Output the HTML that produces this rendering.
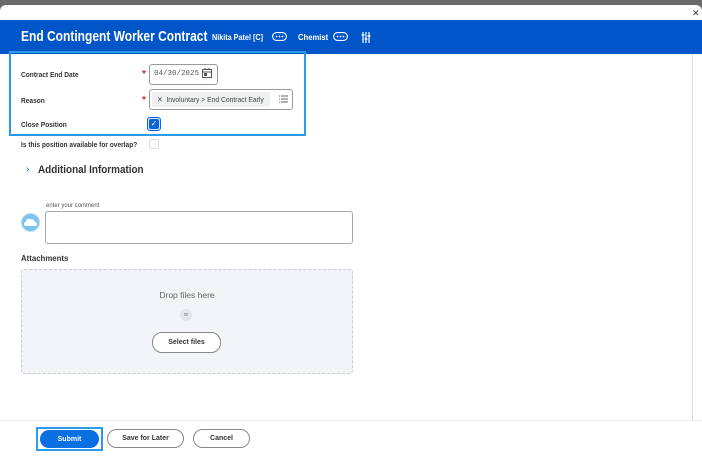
<!DOCTYPE html>
<html><head><style>
*{margin:0;padding:0;box-sizing:border-box}
body{width:702px;height:456px;overflow:hidden;background:#6b6b6b;font-family:"Liberation Sans",sans-serif;position:relative}
.a{position:absolute;white-space:nowrap}
.modal{left:0;top:5px;width:702px;height:451px;background:#fff;border-radius:6px 6px 0 0}
.lbl{font-size:7.5px;color:#333;font-weight:bold;transform:scaleX(.88);transform-origin:0 0}
.ast{color:#d9251d;font-size:10px;font-weight:bold}
.btn{border:1px solid #888;border-radius:10px;font-size:7px;font-weight:bold;color:#333;text-align:center;background:#fff}
.sx{transform-origin:0 0}
</style></head><body>
<div class="a modal"></div>
<div class="a" style="left:692px;top:8px;font-size:9px;color:#333">✕</div>
<div class="a" style="left:0;top:20px;width:702px;height:34px;background:#0055c8"></div>
<div class="a sx" style="left:21px;top:28px;color:#fff;font-size:15px;font-weight:bold;transform:scaleX(.8)">End Contingent Worker Contract</div>
<div class="a sx" style="left:212px;top:32px;color:#fff;font-size:8.5px;font-weight:bold;transform:scaleX(.85)">Nikita Patel [C]</div>
<svg class="a" style="left:272px;top:32px" width="15" height="9" viewBox="0 0 15 9"><rect x="0.6" y="0.6" width="13.8" height="7.8" rx="3.9" fill="none" stroke="#fff" stroke-width="1.1"/><circle cx="4.5" cy="4.5" r=".9" fill="#fff"/><circle cx="7.5" cy="4.5" r=".9" fill="#fff"/><circle cx="10.5" cy="4.5" r=".9" fill="#fff"/></svg>
<div class="a sx" style="left:298px;top:32px;color:#fff;font-size:8.5px;font-weight:bold;transform:scaleX(.9)">Chemist</div>
<svg class="a" style="left:333px;top:32px" width="15" height="9" viewBox="0 0 15 9"><rect x="0.6" y="0.6" width="13.8" height="7.8" rx="3.9" fill="none" stroke="#fff" stroke-width="1.1"/><circle cx="4.5" cy="4.5" r=".9" fill="#fff"/><circle cx="7.5" cy="4.5" r=".9" fill="#fff"/><circle cx="10.5" cy="4.5" r=".9" fill="#fff"/></svg>
<svg class="a" style="left:361px;top:32px" width="10" height="11" viewBox="0 0 10 11" stroke="#fff" stroke-width="1.2" fill="none"><path d="M2 0v11M5 0v11M8 0v11"/><path d="M0.5 3h3M3.5 7h3M6.5 4h3"/></svg>
<div class="a" style="left:9px;top:51px;width:297px;height:85px;border:2px solid #2a9cf0"></div>
<div class="a lbl" style="left:21px;top:70px">Contract End Date</div>
<div class="a lbl" style="left:21px;top:96px">Reason</div>
<div class="a lbl" style="left:21px;top:120px">Close Position</div>
<div class="a lbl" style="left:21px;top:140px">Is this position available for overlap?</div>
<div class="a ast" style="left:142px;top:69px">*</div>
<div class="a ast" style="left:142px;top:95px">*</div>
<div class="a" style="left:149px;top:64px;width:69px;height:21px;border:1px solid #999;border-radius:3px"></div>
<div class="a" style="left:154px;top:70px;font-family:'Liberation Mono',monospace;font-size:7.5px;color:#555">04/30/2025</div>
<svg class="a" style="left:202px;top:68px" width="10" height="10" viewBox="0 0 10 10" fill="none" stroke="#555"><rect x="0.5" y="1.5" width="9" height="8"/><path d="M0.5 4h9M3 0v2M7 0v2"/><rect x="2.5" y="5.5" width="2" height="2" fill="#555"/></svg>
<div class="a" style="left:149px;top:89px;width:144px;height:21px;border:1px solid #999;border-radius:3px"></div>
<div class="a" style="left:152px;top:92px;width:118px;height:15px;background:#eef0f2;border-radius:2px"></div>
<div class="a sx" style="left:157px;top:95px;font-size:7.5px;color:#444;transform:scaleX(.9)">✕&nbsp; Involuntary &gt; End Contract Early</div>
<svg class="a" style="left:279px;top:95px" width="9" height="8" viewBox="0 0 9 8" stroke="#666"><path d="M0 1h1M2 1h7M0 4h1M2 4h7M0 7h1M2 7h7"/></svg>
<div class="a" style="left:147px;top:117px;width:14px;height:14px;border:1.5px solid #0a64d6;border-radius:3px;background:#cfe4fb"></div>
<div class="a" style="left:149px;top:119px;width:10px;height:10px;background:#0a64d6;border-radius:2px;color:#fff;font-size:8px;line-height:10px;text-align:center">✓</div>
<div class="a" style="left:149px;top:139px;width:10px;height:10px;border:1px solid #ddd;border-radius:2px"></div>
<div class="a" style="left:26px;top:164px;font-size:10px;color:#0a64d6">›</div>
<div class="a sx" style="left:38px;top:164px;font-size:11px;font-weight:bold;color:#333;transform:scaleX(.9)">Additional Information</div>
<div class="a" style="left:46px;top:203px;font-size:6px;color:#555">enter your comment</div>
<div class="a" style="left:45px;top:211px;width:308px;height:33px;border:1px solid #aaa;border-radius:3px"></div>
<div class="a" style="left:21px;top:213px;width:19px;height:19px;border-radius:50%;background:#7cc4ec;border:1.5px solid #b7e0f5"></div>
<svg class="a" style="left:24px;top:218px" width="13" height="8" viewBox="0 0 13 8"><path d="M2 8a2 2 0 0 1 0-4a3 3 0 0 1 5-2.5a3 3 0 0 1 4 2.5a2 2 0 0 1 0 4z" fill="#fff"/></svg>
<div class="a sx" style="left:21px;top:253px;font-size:8.5px;font-weight:bold;color:#333;transform:scaleX(.92)">Attachments</div>
<div class="a" style="left:21px;top:269px;width:332px;height:105px;border:1px dashed #c8ccd2;border-radius:3px;background:#f2f4f7"></div>
<div class="a" style="left:21px;top:290px;width:332px;text-align:center;font-size:8.5px;color:#666">Drop files here</div>
<div class="a" style="left:180px;top:309px;width:12px;height:12px;border-radius:50%;background:#e4e6e9;font-size:5px;color:#777;text-align:center;line-height:12px">or</div>
<div class="a btn" style="left:152px;top:332px;width:69px;height:21px;line-height:19px">Select files</div>
<div class="a" style="left:692px;top:54px;width:1px;height:366px;background:#ddd"></div>
<div class="a" style="left:0;top:420px;width:702px;height:1px;background:#eee"></div>
<div class="a" style="left:36px;top:427px;width:67px;height:24px;border:2px solid #2a9cf0"></div>
<div class="a btn" style="left:40px;top:430px;width:59px;height:18px;line-height:17px;background:#0a6fe0;color:#fff;border-color:#0a6fe0">Submit</div>
<div class="a btn" style="left:107px;top:429px;width:77px;height:19px;line-height:17px">Save for Later</div>
<div class="a btn" style="left:193px;top:429px;width:57px;height:19px;line-height:17px">Cancel</div>
</body></html>
